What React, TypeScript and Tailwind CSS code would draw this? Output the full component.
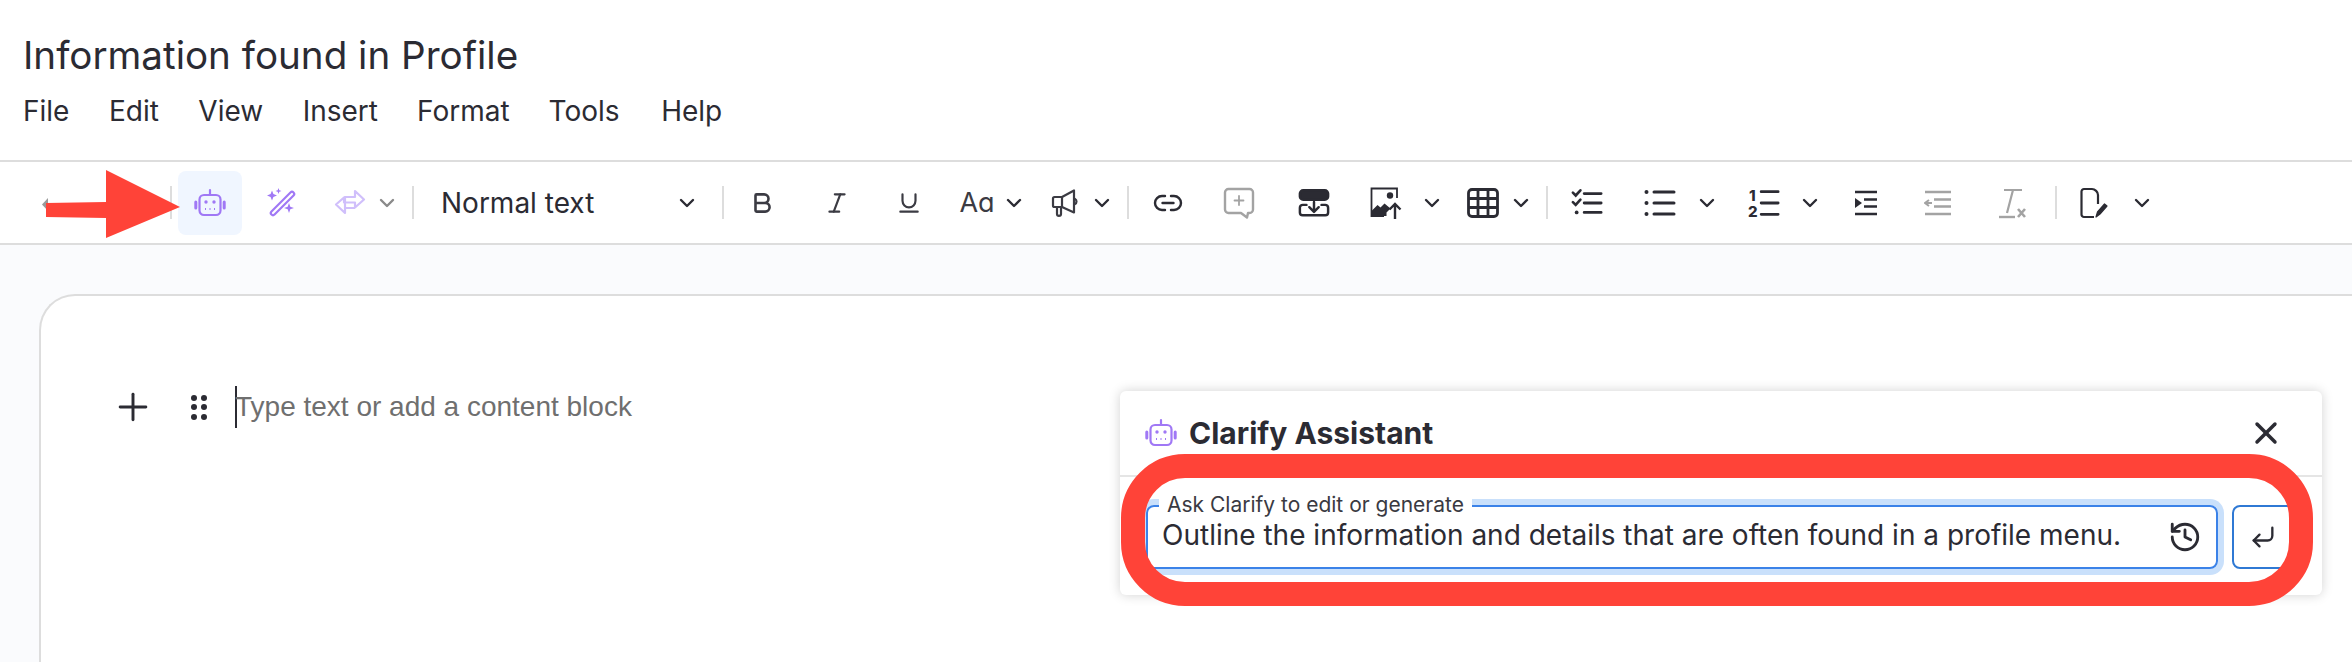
import type { ReactNode } from "react";
import { ChevronDown, X, Plus, History, CornerDownLeft, Bold, Italic, Underline } from "lucide-react";

const Dark = "#2b2b33";
const Purple = "#a078f5";

function Robot() {
  return (
    <svg width="32" height="32" viewBox="0 0 32 32" fill="none" stroke={Purple} strokeWidth="2.2" strokeLinecap="round">
      <path d="M16 3v5" />
      <rect x="5.500" y="8" width="21" height="20" rx="4.500" />
      <path d="M1.800 15v6M30.200 15v6" strokeWidth="3" />
      <circle cx="12" cy="15" r="1.700" fill={Purple} stroke="none" />
      <circle cx="20" cy="15" r="1.700" fill={Purple} stroke="none" />
      <path d="M11 22h1M15.500 22h1M20 22h1" strokeLinecap="butt" strokeWidth="2" />
    </svg>
  );
}

function Chev({ className = "ml-[13px]", color = Dark }: { className?: string; color?: string }) {
  return (
    <div className={`${className} w-[16px] flex justify-center`}>
      <ChevronDown size={24} strokeWidth={2.4} color={color} className="shrink-0" />
    </div>
  );
}

function Divider({ className }: { className: string }) {
  return <div className={`${className} w-[2px] h-[33px] bg-[#dddddd] shrink-0`} />;
}

function Ic({ className, children }: { className: string; children: ReactNode }) {
  return <div className={`${className} w-[32px] h-[32px] flex items-center justify-center shrink-0`}>{children}</div>;
}

export default function App() {
  return (
    <div className="relative w-[2352px] h-[662px] overflow-hidden bg-white text-[#2b2b33] font-['Inter',sans-serif]">
      <div className="h-[162px] border-b-2 border-[#dddddd] pl-[23px] pt-[30px]">
        <div className="text-[38.600px] leading-[50px]">Information found in Profile</div>
        <div className="mt-[13px] flex text-[28px] leading-[36px]">
          <span>File</span>
          <span className="ml-[39.500px]">Edit</span>
          <span className="ml-[39.500px]">View</span>
          <span className="ml-[39.500px]">Insert</span>
          <span className="ml-[39px]">Format</span>
          <span className="ml-[39px]">Tools</span>
          <span className="ml-[41.500px]">Help</span>
        </div>
      </div>

      <div className="h-[83px] border-b-2 border-[#dddddd] flex items-center">
        <Ic className="ml-[40px]">
          <svg width="32" height="32" viewBox="0 0 32 32" fill="none">
            <path d="M8 11 2 17.500 8 24Z" fill="#9a9a9a" />
            <path d="M24 21v6" stroke="#9a9a9a" strokeWidth="2" />
          </svg>
        </Ic>
        <Divider className="ml-[98px]" />
        <div className="ml-[6px] w-[64px] h-[64px] rounded-[8px] bg-[#f0f6ff] flex items-center justify-center"><Robot /></div>
        <Ic className="ml-[24px]">
          <svg width="30" height="30" viewBox="0 0 30 30" fill="none">
            <path d="M6 25 25 6" stroke={Purple} strokeWidth="6.500" strokeLinecap="round" />
            <path d="M6 25 25 6" stroke="#ffffff" strokeWidth="2.200" strokeLinecap="round" />
            <path d="M5 2.500 6.400 6.100 10 7.500 6.400 8.900 5 12.500 3.600 8.900 0 7.500 3.600 6.100Z" fill={Purple} />
            <path d="M11.500 0 12.300 2.200 14.500 3 12.300 3.800 11.500 6 10.700 3.800 8.500 3 10.700 2.200Z" fill={Purple} />
            <path d="M22 15 23.300 18.700 27 20 23.300 21.300 22 25 20.700 21.300 17 20 20.700 18.700Z" fill={Purple} />
          </svg>
        </Ic>
        <Ic className="ml-[36px]">
          <svg width="32" height="28" viewBox="0 0 32 28" fill="none" stroke="#d0bffb" strokeWidth="2.200" strokeLinejoin="round">
            <path d="M11 13V8h10V2l9 8.500-9 8v-5h-5" />
            <path d="M21 19h-10v-4 9l-9-8.500 8-7v5h6" />
          </svg>
        </Ic>
        <Chev className="ml-[13px]" color="#8a8a8a" />
        <Divider className="ml-[17px]" />
        <div className="ml-[27px] w-[153px] text-[28px] leading-[36px] whitespace-nowrap">Normal text</div>
        <Chev className="ml-[85px]" />
        <Divider className="ml-[27px]" />
        <Ic className="ml-[22px]"><Bold size={26} strokeWidth={2.400} color="#3b3b43" /></Ic>
        <Ic className="ml-[43px]"><Italic size={26} strokeWidth={2} color="#3b3b43" /></Ic>
        <Ic className="ml-[40px]"><Underline size={26} strokeWidth={2} color="#3b3b43" /></Ic>
        <Ic className="ml-[36px]"><span className="text-[27px] text-[#3b3b43] leading-none whitespace-nowrap">Aɑ</span></Ic>
        <Chev />
        <Ic className="ml-[27px]">
          <svg width="28" height="30" viewBox="0 0 28 30" fill="none" stroke="#3b3b43" strokeWidth="2.200" strokeLinejoin="round" strokeLinecap="round">
            <path d="M2 10.500a1.500 1.500 0 0 1 1.500-1.500H11l12-6.500v22L11 19H3.500A1.500 1.500 0 0 1 2 17.500Z" />
            <path d="M11 9v10M6 19v7c0 2.500 4 2.500 4 0v-7" />
            <path d="M24 11c2 1 2 4 0 5" />
          </svg>
        </Ic>
        <Chev />
        <Divider className="ml-[17px]" />
        <Ic className="ml-[23px]">
          <svg width="30" height="20" viewBox="0 0 30 20" fill="none" stroke={Dark} strokeWidth="2.400" strokeLinecap="round">
            <path d="M12 3H9a7 7 0 0 0 0 14h3" />
            <path d="M18 3h3a7 7 0 0 1 0 14h-3" />
            <path d="M9.500 10h11" />
          </svg>
        </Ic>
        <Ic className="ml-[39px]">
          <svg width="32" height="32" viewBox="0 0 32 32" fill="none" stroke="#a3a3a3" strokeWidth="2.400" strokeLinejoin="round" strokeLinecap="round">
            <path d="M5.500 2h21A3.500 3.500 0 0 1 30 5.500v17a3.500 3.500 0 0 1-3.500 3.500H25l-1 4.500-6-4.500H5.500A3.500 3.500 0 0 1 2 22.500v-17A3.500 3.500 0 0 1 5.500 2Z" />
            <path d="M16 9v9M11.500 13.500h9" strokeWidth="1.800" />
          </svg>
        </Ic>
        <Ic className="ml-[43px]">
          <svg width="34" height="30" viewBox="0 0 34 30" fill="none" stroke={Dark} strokeWidth="2.600" strokeLinecap="round" strokeLinejoin="round">
            <rect x="2" y="1.500" width="30" height="10" rx="3.500" fill={Dark} />
            <path d="M9 17H5a3 3 0 0 0-3 3v5a3 3 0 0 0 3 3h24a3 3 0 0 0 3-3v-5a3 3 0 0 0-3-3h-4" />
            <path d="M17 14v10M12 19.500l5 5 5-5" />
          </svg>
        </Ic>
        <Ic className="ml-[40px]">
          <svg width="32" height="32" viewBox="0 0 32 32" fill="none">
            <path d="M27 11V1.500H1.500V29H14" stroke={Dark} strokeWidth="1.800" />
            <path d="M1.500 29v-5l6-6 3 2.500 4-4 6 5-4 4v3.500Z" fill={Dark} />
            <circle cx="20" cy="8.500" r="3.200" fill={Dark} />
            <path d="M25 32V17M19.500 22.500 25 17l5.500 5.500" stroke={Dark} strokeWidth="2.400" />
          </svg>
        </Ic>
        <Chev className="ml-[22px]" />
        <Ic className="ml-[27px]">
          <svg width="32" height="30" viewBox="0 0 32 30" fill="none" stroke={Dark} strokeWidth="2.800">
            <rect x="1.500" y="1.500" width="29" height="27" rx="3.500" />
            <path d="M11 2v26M21 2v26M2 10.500h28M2 19.500h28" />
          </svg>
        </Ic>
        <Chev className="ml-[14px]" />
        <Divider className="ml-[17px]" />
        <Ic className="ml-[23px]">
          <svg width="34" height="30" viewBox="0 0 34 30" fill="none" stroke={Dark} strokeWidth="3" strokeLinecap="round">
            <path d="M14 5h18M14 15h18M14 25h18" />
            <path d="M2 4l3 3 5-5.500M2 14l3 3 5-5.500" strokeWidth="2.800" />
            <circle cx="6" cy="25" r="2" fill={Dark} stroke="none" />
          </svg>
        </Ic>
        <Ic className="ml-[41px]">
          <svg width="32" height="30" viewBox="0 0 32 30" fill="none" stroke={Dark} strokeWidth="3" strokeLinecap="round">
            <path d="M10 4h20M10 15h20M10 26h20" />
            <circle cx="2.500" cy="4" r="2" fill={Dark} stroke="none" />
            <circle cx="2.500" cy="15" r="2" fill={Dark} stroke="none" />
            <circle cx="2.500" cy="26" r="2" fill={Dark} stroke="none" />
          </svg>
        </Ic>
        <Chev className="ml-[23px]" />
        <Ic className="ml-[33px]">
          <svg width="34" height="32" viewBox="0 0 34 32" fill="none" stroke={Dark} strokeWidth="3" strokeLinecap="round">
            <path d="M14 4h18M14 16h18M14 28h18" />
            <text x="1" y="14" fontSize="16" fontWeight="800" fontFamily="Inter, sans-serif" fill={Dark} stroke="none">1</text>
            <text x="0" y="31" fontSize="16" fontWeight="800" fontFamily="Inter, sans-serif" fill={Dark} stroke="none">2</text>
          </svg>
        </Ic>
        <Chev className="ml-[22px]" />
        <Ic className="ml-[32px]">
          <svg width="24" height="26" viewBox="0 0 24 26" fill="none" stroke={Dark} strokeWidth="2.600">
            <path d="M1 2h22M10 9.500h13M10 16.500h13M1 24h22" />
            <path d="M1 8l7 5-7 5Z" fill={Dark} stroke="none" />
          </svg>
        </Ic>
        <Ic className="ml-[40px]">
          <svg width="28" height="26" viewBox="0 0 28 26" fill="none" stroke="#a3a3a3" strokeWidth="2.600">
            <path d="M1 2h26M10 9.500h17M10 16.500h17M1 24h26" />
            <path d="M1 13h7M5 10l-4 3 4 3" strokeWidth="2" />
          </svg>
        </Ic>
        <Ic className="ml-[43px]">
          <svg width="30" height="32" viewBox="0 0 30 32" fill="none" stroke="#a3a3a3" strokeWidth="2.200">
            <path d="M6 3h18M15 3 9 26" />
            <path d="M1 30h16" strokeWidth="2.400" />
            <path d="M20 22l7 8M27 22l-7 8" strokeWidth="2.600" />
          </svg>
        </Ic>
        <Divider className="ml-[26px]" />
        <Ic className="ml-[21px]">
          <svg width="30" height="32" viewBox="0 0 30 32" fill="none" stroke={Dark} strokeWidth="2.200" strokeLinejoin="round">
            <path d="M15 30H5a2.500 2.500 0 0 1-2.500-2.500v-23A2.500 2.500 0 0 1 5 2h8c3 0 6 3 6 6v9" />
            <path d="M17 30l1.500-5 7-8 2.500 2-7 8Z" fill={Dark} strokeWidth="1.200" />
          </svg>
        </Ic>
        <Chev className="ml-[24px]" />
      </div>

      <div className="h-[417px] bg-[#fafbfd] pl-[39px] pt-[49px]">
        <div className="h-[400px] w-[2313px] bg-white border-2 border-r-0 border-[#dddddd] rounded-tl-[36px] pl-[70px] pt-[93px]">
          <div className="flex items-center h-[36px]">
            <Plus size={44} strokeWidth={1.600} color={Dark} />
            <div className="ml-[36px] grid grid-cols-2 gap-x-[4px] gap-y-[3.500px]">
              {[0, 1, 2, 3, 4, 5].map((i) => (
                <span key={i} className="w-[6px] h-[6px] rounded-full bg-[#2b2b33]" />
              ))}
            </div>
            <div className="ml-[28px] w-[2px] h-[42px] bg-[#2b2b33]" />
            <span className="ml-[-2px] font-['Liberation_Sans',sans-serif] text-[28px] leading-[36px] text-[#6f6f6f] whitespace-nowrap">Type text or add a content block</span>
          </div>
        </div>
      </div>

      <div className="absolute left-[1120px] top-[391px] w-[1202px] h-[204px] bg-white rounded-[6px] shadow-[0_0_12px_rgba(0,0,0,0.18)]">
        <div className="h-[86px] border-b-2 border-[#e5e5e5] flex items-center pl-[25px] pr-[38px]">
          <Robot />
          <span className="ml-[12px] text-[30px] font-bold leading-none">Clarify Assistant</span>
          <X size={36} strokeWidth={2.300} color={Dark} className="ml-auto" />
        </div>
        <div className="flex items-start pl-[26px] pt-[28px]">
          <div className="relative w-[1072px] h-[64px] shrink-0 rounded-[8px] border-2 border-[#3b82e8] ring-[6px] ring-[#c9e0fb] flex items-center pl-[14px] pr-[14px]">
            <span className="absolute left-[11px] top-[-16px] bg-white px-[8px] text-[21px] leading-[28px] text-[#3a3a42] whitespace-nowrap">Ask Clarify to edit or generate</span>
            <span className="mt-[-4px] text-[28px] whitespace-nowrap">Outline the information and details that are often found in a profile menu.</span>
            <History size={34} strokeWidth={2} color={Dark} className="ml-auto shrink-0" />
          </div>
          <div className="ml-[14px] w-[68px] h-[64px] shrink-0 rounded-[8px] border-2 border-[#2f79d4] flex items-center pl-[15px]">
            <CornerDownLeft size={28} strokeWidth={2} color={Dark} />
          </div>
        </div>
      </div>

      <div className="absolute left-[1121px] top-[454px] w-[1192px] h-[152px] rounded-[64px] border-[24px] border-[#ff4338]" />

      <svg className="absolute left-[44px] top-[170px]" width="140" height="70" viewBox="0 0 140 70">
        <path d="M2 33 L62 32 L62 0 L136 37 L62 68 L62 48 L2 47 Z" fill="#ff4338" />
      </svg>
    </div>
  );
}
